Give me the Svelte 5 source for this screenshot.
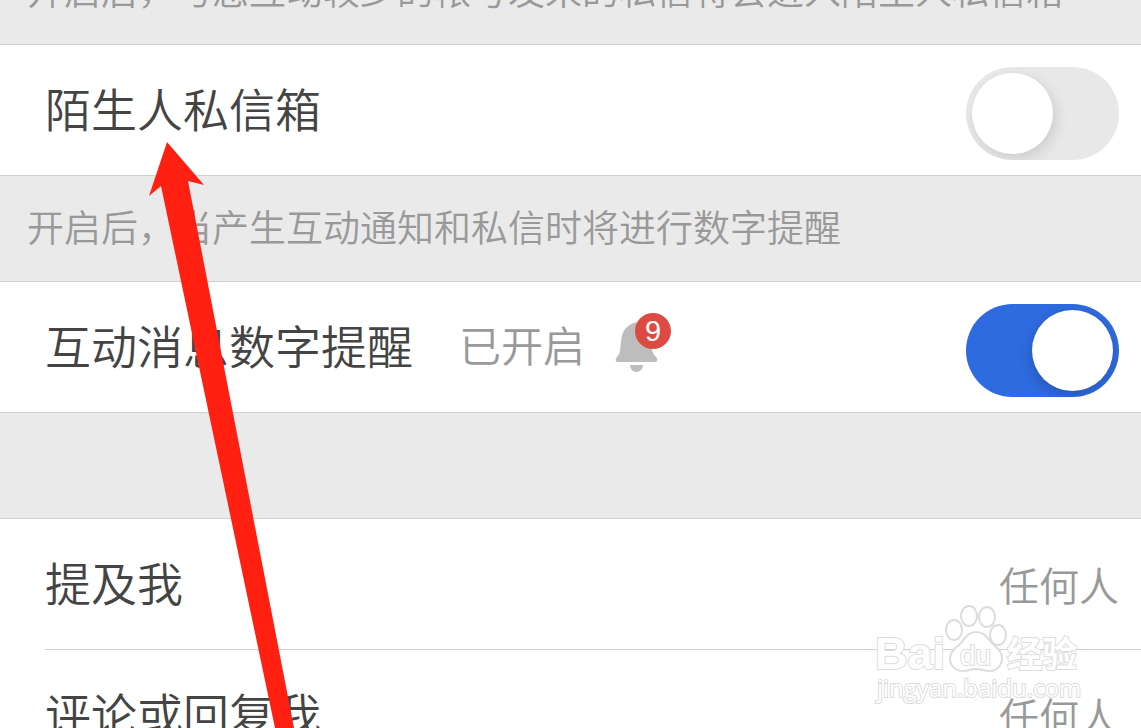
<script>
	let strangerInbox = $state(false);
	let digitAlert = $state(true);

	const permissions = [
		{ label: '提及我', value: '任何人' },
		{ label: '评论或回复我', value: '任何人' }
	];
</script>

<main>
	<div class="settings">
		<p class="hint">开启后，与您互动较少的帐号发来的私信将会进入陌生人私信箱</p>

		<div class="row">
			<label class="title" for="stranger">陌生人私信箱</label>
			<input id="stranger" class="switch" type="checkbox" role="switch" bind:checked={strangerInbox} />
		</div>

		<p class="hint">开启后，当产生互动通知和私信时将进行数字提醒</p>

		<div class="row">
			<label class="title" for="digit">互动消息数字提醒</label>
			<span class="status">已开启</span>
			<svg class="bell" viewBox="0 0 58 60" width="58" height="60" aria-hidden="true">
				<path
					fill="#bdbdbd"
					d="M22 9C12 11 7 18 6 28C5 38 5 41 2 44C0 46 0 49 3 49H40C43 49 43 46 41 44C38 41 37 38 36 30V12Z"
				/>
				<path fill="#bdbdbd" d="M15 52H28C28 56 25 59 21 59C18 59 15 56 15 52Z" />
				<circle cx="38" cy="18" r="18" fill="#dc4a43" />
				<text x="38" y="28" text-anchor="middle">9</text>
			</svg>
			<input id="digit" class="switch" type="checkbox" role="switch" bind:checked={digitAlert} />
		</div>

		<div class="hint"></div>

		{#each permissions as item}
			<button class="row link">
				<span class="title">{item.label}</span>
				<span class="value">{item.value}</span>
			</button>
		{/each}
	</div>

	<svg class="arrow" viewBox="0 0 300 728" width="300" height="728" aria-hidden="true">
		<polygon fill="#ff2012" points="167,142 204,185 188,181 294,728 275,728 161,186 149,196" />
	</svg>

	<svg class="watermark" viewBox="0 0 214 106" width="214" height="106" aria-hidden="true">
		<text class="brand" x="4" y="69" font-size="45">Bai</text>
		<ellipse cx="83" cy="30" rx="8" ry="10" />
		<ellipse cx="98" cy="16" rx="8" ry="10" />
		<ellipse cx="116" cy="17" rx="8" ry="10" />
		<ellipse cx="127" cy="35" rx="8" ry="10" />
		<path
			d="M105 32C97 32 94 38 90 43C85 48 79 51 79 59C79 66 85 71 92 71C97 71 100 69 105 69C110 69 113 71 119 71C126 71 131 65 131 58C131 51 125 47 120 42C116 37 113 32 105 32Z"
		/>
		<text class="brand du" x="89" y="65" font-size="28">du</text>
		<text class="brand cjk" x="136" y="67" font-size="35">经验</text>
		<text class="url" x="6" y="97" font-size="24">jingyan.baidu.com</text>
	</svg>
</main>

<style>
	:global(body) {
		margin: 0;
		background: #fff;
	}

	main {
		position: relative;
		height: 100vh;
		overflow: hidden;
		font-family: 'Noto Sans CJK SC', sans-serif;
		font-weight: 350;
	}

	/* list is scrolled so the first hint is partly out of view */
	.settings {
		margin-top: -61px;
	}

	.hint {
		box-sizing: border-box;
		height: 106px;
		margin: 0;
		padding: 0 27px;
		border-bottom: 1px solid #d0d0d0;
		background: #eaeaea;
		color: #999;
		font-size: 37px;
		line-height: 100px;
		white-space: nowrap;
	}

	.row {
		box-sizing: border-box;
		display: flex;
		align-items: center;
		height: 131px;
		padding: 0 22px 0 45px;
		border-bottom: 1px solid #d0d0d0;
		background: #fff;
		white-space: nowrap;
	}

	.link {
		width: calc(100% - 45px);
		margin-left: 45px;
		padding-left: 0;
		border-width: 0 0 1px;
		font: inherit;
		text-align: left;
		cursor: pointer;
	}

	.title,
	.status {
		margin-bottom: 6px;
		line-height: 64px;
	}

	.title {
		color: #444;
		font-size: 46px;
	}

	.status {
		margin-left: 46px;
		color: #999;
		font-size: 42px;
	}

	.value {
		margin-left: auto;
		color: #999;
		font-size: 40px;
		line-height: 64px;
	}

	.bell {
		margin: 0 0 8px 30px;
	}

	.bell text {
		fill: #fff;
		font-family: 'Liberation Sans', sans-serif;
		font-size: 29px;
		font-weight: 400;
	}

	.switch {
		appearance: none;
		box-sizing: border-box;
		width: 153px;
		height: 93px;
		margin: 6px 0 0 auto;
		padding: 6px;
		border-radius: 47px;
		background: #e8e8e8;
		overflow: hidden;
		cursor: pointer;
	}

	.switch::before {
		content: '';
		display: block;
		width: 81px;
		height: 81px;
		border-radius: 50%;
		background: #fff;
		box-shadow: 3px 5px 14px rgba(0, 0, 0, 0.12);
	}

	.switch:checked {
		background: #2f6be0;
	}

	.switch:checked::before {
		margin-left: auto;
		box-shadow: -1px 4px 14px rgba(0, 0, 0, 0.2);
	}

	.arrow {
		position: absolute;
		top: 0;
		left: 0;
		pointer-events: none;
	}

	.watermark {
		position: absolute;
		right: 56px;
		bottom: 22px;
		fill: #fff;
		stroke: #dcdcdc;
		stroke-width: 2px;
		pointer-events: none;
	}

	.watermark text {
		paint-order: stroke;
	}

	.brand {
		font-family: 'Liberation Sans', sans-serif;
		font-weight: 700;
	}

	.du {
		font-weight: 400;
	}

	.cjk {
		font-family: 'Noto Sans CJK SC', sans-serif;
	}

	.url {
		font-family: 'Open Sans', sans-serif;
		font-weight: 400;
	}
</style>
